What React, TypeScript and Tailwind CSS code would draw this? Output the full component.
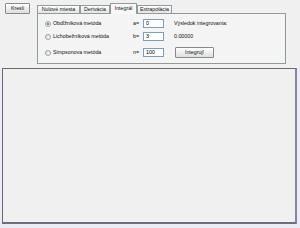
const font = { fontFamily: '"Liberation Sans", Arial, sans-serif' };

function Radio({ checked }: { checked?: boolean }) {
  return (
    <span className="flex h-[6px] w-[6px] items-center justify-center rounded-full border border-[#9aa3ab] bg-gradient-to-br from-[#d8d8d8] to-white">
      {checked && <span className="h-[2px] w-[2px] rounded-full bg-[#2f8a3c]" />}
    </span>
  );
}

function Field({ value }: { value: string }) {
  return (
    <div className="flex h-[9px] w-[21px] items-center border border-[#7f9db9] bg-white pl-[2px] leading-none text-black">
      {value}
    </div>
  );
}

function Row({
  label,
  sym,
  value,
  checked,
  children,
}: {
  label: string;
  sym: string;
  value: string;
  checked?: boolean;
  children?: React.ReactNode;
}) {
  return (
    <div className="flex items-center">
      <div className="flex w-[88px] items-center gap-[2px]">
        <Radio checked={checked} />
        <span>{label}</span>
      </div>
      <span className="w-[10px]">{sym}</span>
      <Field value={value} />
      <div className="ml-[10px] flex items-center">{children}</div>
    </div>
  );
}

const tabs = ["Nulové miesta", "Derivácia", "Integrál", "Extrapolácia"];
const tabW = ["w-[43px]", "w-[30px]", "w-[27px]", "w-[35px]"];

export default function App() {
  return (
    <div
      className="flex h-[228px] w-[300px] flex-col overflow-hidden bg-[#f0f0f0] text-[5.3px] leading-none text-[#111]"
      style={font}
    >
      <div className="flex h-[68px] items-start">
        <button className="ml-[5px] mt-[3px] flex h-[11px] w-[25px] items-center justify-center rounded-[1px] border border-[#8a8a8a] bg-gradient-to-b from-white to-[#dedede]">
          Kresli
        </button>
        <div className="ml-[7px] mt-[3px] flex flex-col">
          <div className="flex h-[10px] items-end">
            {tabs.map((t, i) =>
              i === 2 ? (
                <div
                  key={t}
                  className={`${tabW[i]} relative z-10 -mb-px flex h-[11px] items-center justify-center border border-b-0 border-[#919b9c] bg-[#f7f7f7]`}
                >
                  {t}
                </div>
              ) : (
                <div
                  key={t}
                  className={`${tabW[i]} flex h-[8px] items-center justify-center border border-b-0 border-[#919b9c] bg-gradient-to-b from-white to-[#e4e4e4]`}
                >
                  {t}
                </div>
              )
            )}
          </div>
          <div className="flex h-[51px] w-[249px] flex-col border border-[#919b9c] bg-[#f4f4f4] pl-[7px] pt-[5px]">
            <Row label="Obdĺžniková metóda" sym="a=" value="0" checked>
              <span>Výsledok integrovania:</span>
            </Row>
            <div className="mt-[4px]">
              <Row label="Lichobežníková metóda" sym="b=" value="3">
                <span>0.00000</span>
              </Row>
            </div>
            <div className="mt-[6px] flex h-[11px] items-center">
              <Row label="Simpsonova metóda" sym="n=" value="100">
                <button className="ml-[1px] flex h-[11px] w-[39px] items-center justify-center rounded-[1px] border border-[#8a8a8a] bg-gradient-to-b from-white to-[#dedede]">
                  Integruj!
                </button>
              </Row>
            </div>
          </div>
        </div>
      </div>
      <div className="flex flex-1 bg-[#ebebf5] pb-[4px] pl-[2px] pr-[3px]">
        <div className="flex-1 border-l border-t border-r-2 border-b-2 border-l-[#6b6b6b] border-t-[#6b6b6b] border-r-[#86869a] border-b-[#6e6e80] bg-[#f0f0f0]" />
      </div>
    </div>
  );
}
